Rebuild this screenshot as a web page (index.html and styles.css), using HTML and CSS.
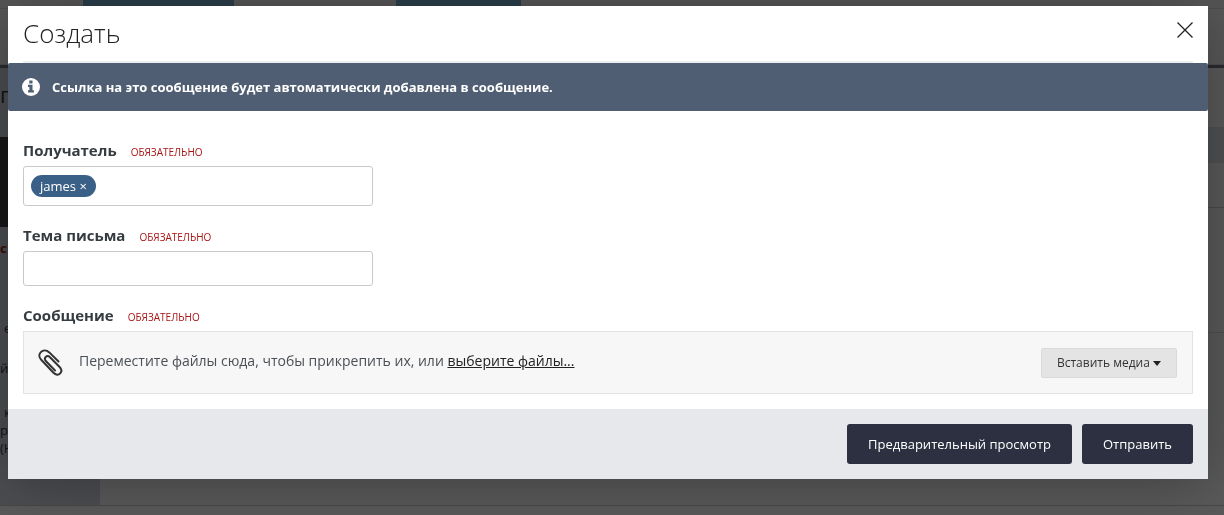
FILE: index.html
```
<!DOCTYPE html>
<html lang="ru">
<head>
  <meta charset="UTF-8">
  <meta name="viewport" content="width=device-width, initial-scale=1">
  <title>Создать</title>
  <link rel="stylesheet" href="styles.css">
</head>
<body>
  <!-- Page under the dialog -->
  <div class="page" aria-hidden="true">
    <div class="tabs">
      <span class="tab tab-wide"></span>
      <span class="tab"></span>
    </div>
    <div class="subnav"></div>
    <div class="topic">
      <div class="author">
        <div class="author-name">п</div>
        <div class="author-photo"></div>
        <div class="author-group">с</div>
        <div class="author-info">
          <p class="indent">е</p>
          <p class="city">й</p>
          <p class="indent">к</p>
          <p>р</p>
          <p>(Н</p>
        </div>
      </div>
      <div class="posts">
        <div class="post-head"></div>
        <div class="post-bar"></div>
        <div class="post-text"></div>
        <div class="post-reply"></div>
      </div>
    </div>
  </div>

  <div class="overlay">
    <form class="dialog" role="dialog" aria-labelledby="dialogTitle">
      <div class="dialog-header">
        <h3 id="dialogTitle">Создать</h3>
        <button type="button" class="close" aria-label="Закрыть">
          <svg width="16" height="16" viewBox="0 0 16 16"><path d="M.5.5l15 15M15.500.5l-15 15" stroke="#222" stroke-width="1.300" fill="none"/></svg>
        </button>
      </div>

      <div class="message">
        <svg width="18" height="18" viewBox="0 0 18 18">
          <circle cx="9" cy="9" r="9" fill="#fff"/>
          <path d="M7.300 2.500h3.200v2.900H7.300zM6 6.700h4.500v5.500h1.400v2.300H6v-2.300h1.400V9H6z" fill="#4f5e72"/>
        </svg>
        <span>Ссылка на это сообщение будет автоматически добавлена в сообщение.</span>
      </div>

      <div class="fields">
        <div class="field">
          <div class="field-label"><label for="to">Получатель</label><span class="required">Обязательно</span></div>
          <div class="tokens">
            <span class="token">james <button type="button" aria-label="Удалить james">×</button></span>
            <input type="text" id="to">
          </div>
        </div>
        <div class="field">
          <div class="field-label"><label for="subject">Тема письма</label><span class="required">Обязательно</span></div>
          <input type="text" id="subject" class="text-input">
        </div>
        <div class="field">
          <div class="field-label"><span class="label">Сообщение</span><span class="required">Обязательно</span></div>
          <div class="uploader">
            <svg class="clip" width="26" height="28" viewBox="0 0 26 28" fill="none" stroke="#333" stroke-width="2" stroke-linecap="round" stroke-linejoin="round">
              <path d="M20.500 12.500L11.300 3.400C8.500.8 5 .8 2.800 3.100C.7 5.300 .9 8.500 3.400 11L15.500 23.800C17.800 26.100 20.500 26.200 22.200 24.400C23.900 22.600 23.700 20.100 21.600 18L12 8.200C10.600 6.900 8.800 6.900 7.700 8C6.600 9.200 6.700 10.900 8.100 12.300L17 21.500"/>
            </svg>
            <div class="drop-text">Переместите файлы сюда, чтобы прикрепить их, или <a href="#">выберите файлы...</a></div>
            <button type="button" class="media">Вставить медиа <span class="caret"></span></button>
          </div>
        </div>
      </div>

      <div class="dialog-footer">
        <button type="button" class="button">Предварительный просмотр</button>
        <button type="submit" class="button">Отправить</button>
      </div>
    </form>
  </div>
</body>
</html>
```
FILE: styles.css
```
* { box-sizing: border-box; }

html, body { margin: 0; height: 100%; overflow: hidden; }

body {
  font-family: "Open Sans", "Noto Sans", sans-serif;
  font-size: 13px;
  line-height: 18px;
  color: #353c41;
  background: #fff;
}

button, input { font-family: inherit; font-size: 13px; }
button { cursor: pointer; }

/* Page under the dialog */
.page { height: 100%; display: flex; flex-direction: column; }
.tabs { display: flex; gap: 162px; height: 9px; padding-left: 83px; background: #f4f4f4; border-bottom: 1px solid #ddd; }
.tab { width: 125px; background: #78b0d2; }
.tab-wide { width: 151px; }
.subnav { height: 56px; background: #f8f8f8; border-bottom: 1px solid #ddd; }
.topic { display: flex; height: 441px; border-top: 3px solid #777b88; border-bottom: 1px solid #ccc; }
.author { width: 100px; background: #d8dce6; }
.author-name { height: 69px; padding-top: 17px; font-size: 22px; }
.author-photo { height: 90px; background: #444; }
.author-group { padding-top: 12px; font-weight: 700; color: #a02020; }
.author-info { padding-top: 62px; }
.author-info p { margin: 0; }
.author-info .indent { padding-left: 4px; }
.author-info .city { margin: 22px 0 26px; }
.posts { flex: 1; }
.post-head { height: 59px; background: #fff; }
.post-bar { height: 36px; background: #e0e4e9; }
.post-text { height: 45px; border-bottom: 1px solid #ccc; }
.post-reply { height: 125px; border-bottom: 1px solid #ddd; }

.overlay { position: fixed; top: 0; right: 0; bottom: 0; left: 0; padding: 6px 16px 0 8px; background: rgba(0,0,0,0.65); }

/* Dialog */
.dialog { background: #fff; box-shadow: 0 5px 55px rgba(0,0,0,0.3); }
.dialog-header { display: flex; justify-content: space-between; height: 57px; margin: 0 15px; border-bottom: 2px solid #ebeef2; }
.dialog-header h3 { margin: 0; font-size: 26px; font-weight: 300; line-height: 54px; color: #222; }
.close { height: 16px; margin-top: 16px; padding: 0; border: 0; background: none; }
.close svg { display: block; }

.message {
  display: flex; align-items: center; gap: 12px;
  min-height: 48px; padding: 0 15px 0 14px;
  border-radius: 2px;
  background: #4f5e72; color: #fff;
  font-weight: 700;
}

.fields { display: flex; flex-direction: column; gap: 20px; padding: 29px 15px 15px; }
.field-label { display: flex; align-items: baseline; gap: 14px; height: 26px; line-height: 20px; }
.field + .field { margin-top: -1px; }
.field-label label, .label { font-size: 15px; font-weight: 700; }
.required { font-size: 10px; text-transform: uppercase; color: #aa1414; }

.tokens, .text-input { width: 350px; max-width: 100%; border: 1px solid #c9c9c9; border-radius: 3px; background: #fff; }
.tokens { display: flex; align-items: center; height: 40px; padding: 0 7px; }
.tokens input { flex: 1; min-width: 0; border: 0; outline: 0; }
.token { height: 22px; padding: 0 9px; border-radius: 11px; background: #3a6087; color: #fff; font-weight: 500; line-height: 22px; }
.token button { padding: 0; border: 0; background: none; color: #fff; line-height: 18px; }
.text-input { display: block; height: 35px; padding: 8px; }

.uploader { display: flex; align-items: center; min-height: 63px; padding: 0 15px 0 14px; border: 1px solid #e3e3e3; background: #f7f7f7; }
.clip { margin-right: 15px; }
.drop-text { flex: 1; padding-bottom: 4px; font-size: 14px; color: #4a5056; }
.drop-text a { color: #222; }
.media { height: 30px; padding: 0 15px; border: 1px solid #dadada; border-radius: 2px; background: #e4e4e4; color: #333; font-size: 12px; }
.caret { display: inline-block; border: 4px solid transparent; border-top: 5px solid #222; border-bottom: 0; vertical-align: middle; }

.dialog-footer { display: flex; justify-content: flex-end; gap: 10px; padding: 15px; background: #e6e8ec; }
.button { height: 40px; padding: 0 21px; border: 0; border-radius: 3px; background: #2c3040; color: #fff; font-weight: 500; }
```
